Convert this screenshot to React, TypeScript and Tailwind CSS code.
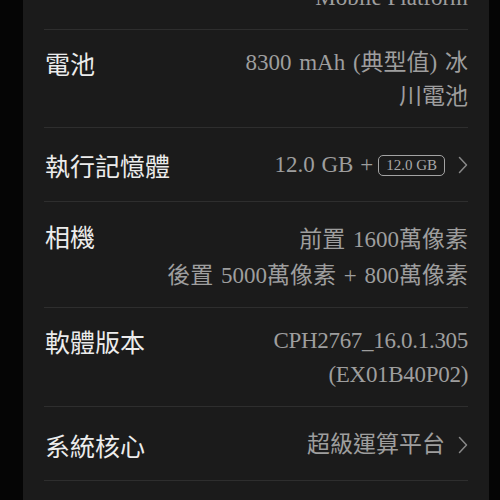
import React from "react";

const labelFont = { fontFamily: '"Noto Sans CJK TC", "Noto Sans", sans-serif' };
const valueFont = { fontFamily: '"Liberation Serif", "Noto Sans CJK TC", serif' };

function Chevron() {
  return (
    <svg width="10" height="18" viewBox="0 0 10 18" className="ml-[13px] shrink-0">
      <path d="M1.5 1.5 L8.5 9 L1.5 16.5" fill="none" stroke="#888888" strokeWidth="1.5" strokeLinecap="round" strokeLinejoin="round" />
    </svg>
  );
}

export default function App() {
  return (
    <div className="w-[500px] h-[500px] bg-[#050505] overflow-hidden flex">
      <div className="ml-[23px] w-[466px] h-full bg-[#1b1b1b] px-[21px]">
        <div className="-mt-[19px] flex flex-col">
          {/* top cut row */}
          <div className="border-b border-[#2e2e2e] pb-[14px] flex justify-end">
            <div className="text-[23px] leading-[34px] text-[#9e9e9e]" style={valueFont}>
              Mobile Platform
            </div>
          </div>

          {/* Battery */}
          <div className="border-b border-[#2e2e2e] pt-[16px] pb-[13px] flex justify-between items-start">
            <div className="text-[25px] leading-[34px] text-[#ececec] shrink-0 pl-[1px]" style={labelFont}>
              電池
            </div>
            <div className="text-[23px] leading-[34px] text-[#9e9e9e] text-right w-[232px] [word-spacing:2px]" style={valueFont}>
              8300 mAh (典型值) 冰川電池
            </div>
          </div>

          {/* Memory */}
          <div className="border-b border-[#2e2e2e] pt-[20px] pb-[19px] flex justify-between items-center">
            <div className="text-[25px] leading-[34px] text-[#ececec] pl-[1px]" style={labelFont}>
              執行記憶體
            </div>
            <div className="flex items-center text-[23px] leading-[34px] text-[#9e9e9e] [word-spacing:1px]" style={valueFont}>
              <span>12.0 GB +</span>
              <span className="ml-[5px] inline-flex items-center h-[21px] px-[7px] border-[1.5px] border-[#a3a3a3] rounded-[5px] text-[15px] leading-none text-[#a8a8a8] [word-spacing:0px]">
                12.0 GB
              </span>
              <Chevron />
            </div>
          </div>

          {/* Camera */}
          <div className="border-b border-[#2e2e2e] pt-[20px] pb-[13px] flex justify-between items-start">
            <div className="-mt-[3px] text-[25px] leading-[34px] text-[#ececec] pl-[1px]" style={labelFont}>
              相機
            </div>
            <div className="text-[23px] leading-[36px] text-[#9e9e9e] text-right [word-spacing:2px]" style={valueFont}>
              <div>前置 1600萬像素</div>
              <div>後置 5000萬像素 + 800萬像素</div>
            </div>
          </div>

          {/* Software */}
          <div className="border-b border-[#2e2e2e] pt-[16px] pb-[14px] flex justify-between items-start">
            <div className="text-[25px] leading-[34px] text-[#ececec] pl-[1px]" style={labelFont}>
              軟體版本
            </div>
            <div className="text-[23px] leading-[34px] text-[#9e9e9e] text-right tracking-[-0.3px]" style={valueFont}>
              <div>CPH2767_16.0.1.305</div>
              <div>(EX01B40P02)</div>
            </div>
          </div>

          {/* System core */}
          <div className="border-b border-[#2e2e2e] pt-[21px] pb-[18px] flex justify-between items-center">
            <div className="text-[25px] leading-[34px] text-[#ececec] pl-[1px]" style={labelFont}>
              系統核心
            </div>
            <div className="flex items-center text-[23px] leading-[34px] text-[#9e9e9e]" style={valueFont}>
              <span>超級運算平台</span>
              <Chevron />
            </div>
          </div>
        </div>
      </div>
    </div>
  );
}
